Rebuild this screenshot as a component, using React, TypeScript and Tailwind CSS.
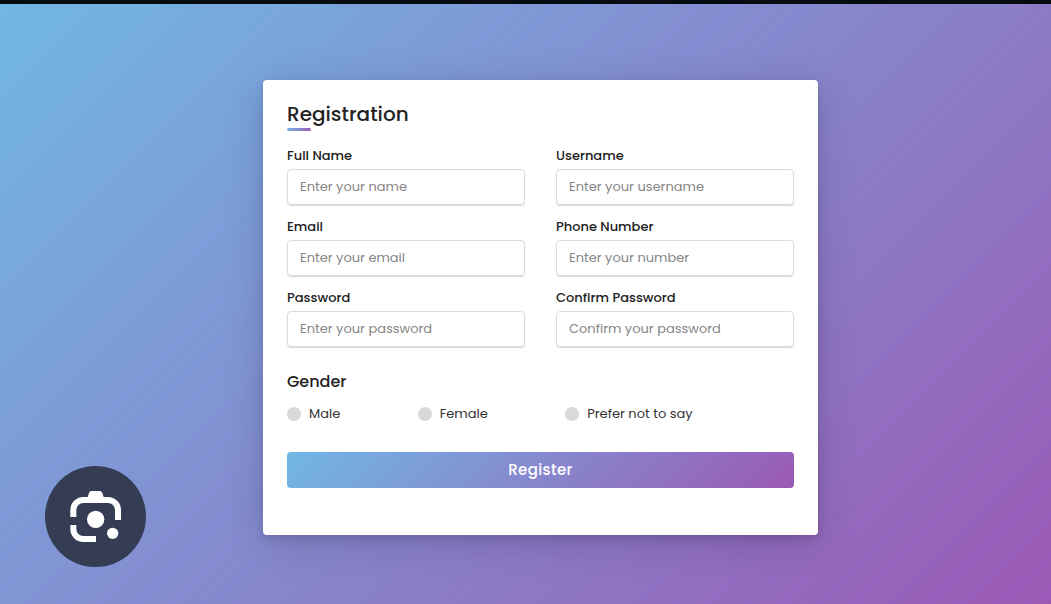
const fields = [
  { id: "full-name", label: "Full Name", placeholder: "Enter your name", type: "text" },
  { id: "username", label: "Username", placeholder: "Enter your username", type: "text" },
  { id: "email", label: "Email", placeholder: "Enter your email", type: "email" },
  { id: "phone", label: "Phone Number", placeholder: "Enter your number", type: "tel" },
  { id: "password", label: "Password", placeholder: "Enter your password", type: "password" },
  { id: "confirm", label: "Confirm Password", placeholder: "Confirm your password", type: "password" },
];

const genders = ["Male", "Female", "Prefer not to say"];

function LensIcon() {
  return (
    <svg viewBox="0 0 303 303" className="size-full" fill="none" aria-hidden="true">
      <g stroke="white" strokeWidth="18">
        <path d="M85 153V132a30 30 0 0 1 30-30h74a30 30 0 0 1 30 30v30" />
        <path d="M85 177v12a30 30 0 0 0 30 30h38" />
      </g>
      <path d="M127 96l5-15q2-6 8-6h24q6 0 8 6l5 15z" fill="white" />
      <circle cx="152" cy="160" r="26" fill="white" />
      <circle cx="203" cy="202" r="17" fill="white" />
    </svg>
  );
}

export default function App() {
  return (
    <div className="relative flex min-h-screen flex-col border-t-4 border-[#070b12] bg-linear-[135deg,#71b7e6,#9b59b6] bg-origin-border font-['Poppins',Inter,sans-serif] text-[#222]">
      <main className="flex flex-1 items-center justify-center pt-[7px] pl-[30px]">
        <form
          className="w-full max-w-[555px] rounded bg-white px-6 pt-5 pb-[47px] shadow-[0_4px_8px_rgba(0,0,0,0.12),0_8px_40px_rgba(0,0,0,0.16)]"
          onSubmit={(e) => e.preventDefault()}
        >
          <h1 className="text-[20px] leading-7 font-medium">Registration</h1>
          <div className="h-[3px] w-6 rounded-sm bg-linear-[135deg,#71b7e6,#9b59b6]" />

          <div className="mt-[15px] grid grid-cols-2 gap-x-[31px] gap-y-3">
            {fields.map((f) => (
              <div key={f.id} className="flex flex-col gap-[3px]">
                <label htmlFor={f.id} className="text-[13px] leading-5 font-medium">
                  {f.label}
                </label>
                <input
                  id={f.id}
                  type={f.type}
                  placeholder={f.placeholder}
                  className="h-9 w-full rounded border border-[#dcdcdc] px-3 text-[13px] shadow-[0_1px_1px_rgba(0,0,0,0.16)] outline-none placeholder:text-[#858585] focus:border-[#9b59b6]"
                />
              </div>
            ))}
          </div>

          <fieldset className="mt-[23px]">
            <legend className="text-base leading-6 font-medium">Gender</legend>
            <div className="mt-[10px] flex w-4/5 justify-between">
              {genders.map((g) => (
                <label key={g} className="flex items-center gap-2 text-[13px] leading-5 text-[#333]">
                  <input
                    type="radio"
                    name="gender"
                    value={g}
                    className="size-[14px] appearance-none rounded-full bg-[#d9d9d9] checked:bg-[#9b59b6]"
                  />
                  {g}
                </label>
              ))}
            </div>
          </fieldset>

          <button
            type="submit"
            className="mt-7 h-9 w-full rounded bg-linear-[135deg,#71b7e6,#9b59b6] text-[15px] font-medium tracking-wide text-white"
          >
            Register
          </button>
        </form>
      </main>

      <button
        type="button"
        aria-label="Search inside image"
        className="absolute bottom-[37px] left-[45px] size-[101px] rounded-full bg-[#353d55]"
      >
        <LensIcon />
      </button>
    </div>
  );
}
